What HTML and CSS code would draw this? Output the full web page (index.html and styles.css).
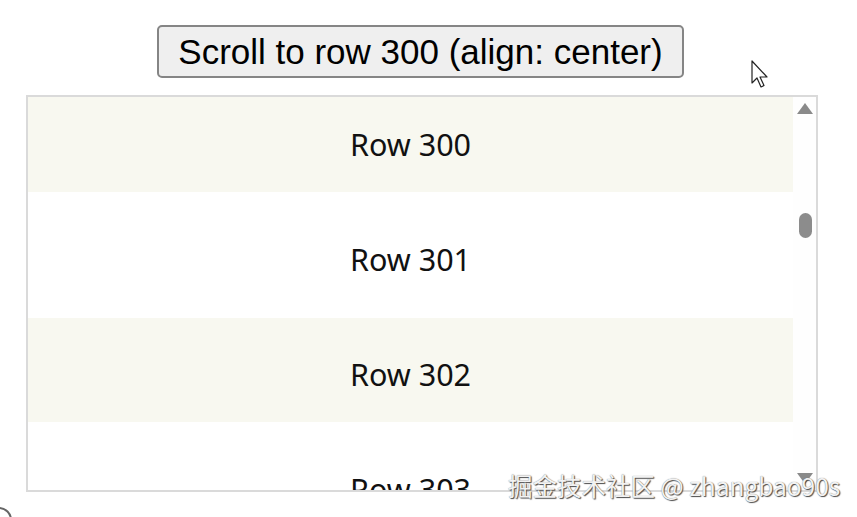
FILE: index.html
```html
<!DOCTYPE html>
<html lang="en">
<head>
<meta charset="utf-8">
<title>Scroll to row</title>
<link rel="stylesheet" href="styles.css">
</head>
<body>
<div class="app">
  <div class="toolbar">
    <button class="scroll-btn" type="button">Scroll to row 300 (align: center)</button>
  </div>
  <div class="list">
    <div class="viewport">
      <div class="rows">
        <div class="row even">Row 300</div>
        <div class="row odd">Row 301</div>
        <div class="row even">Row 302</div>
        <div class="row odd">Row 303</div>
      </div>
    </div>
    <div class="scrollbar">
      <span class="arrow up"></span>
      <span class="track"><span class="thumb"></span></span>
      <span class="arrow down"></span>
    </div>
  </div>
</div>
<div class="watermark">掘金技术社区 @ zhangbao90s</div>
<svg class="cursor" width="20" height="30" viewBox="0 0 20 30" aria-hidden="true">
  <path d="M1 1 L1 23 L6 18 L10 27 L13 25.5 L9 17 L16 17 Z" fill="#fff" stroke="#222" stroke-width="1.2" stroke-linejoin="round"/>
</svg>
<span class="corner"></span>
</body>
</html>
```

FILE: styles.css
```css
html, body {
  margin: 0;
  padding: 0;
  background: #ffffff;
}

body {
  position: relative;
  width: 857px;
  height: 517px;
  overflow: hidden;
  font-family: "Noto Sans", "Open Sans", sans-serif;
}

.app {
  display: flex;
  flex-direction: column;
  width: 792px;
  padding: 25px 0 0 26px;
  gap: 17px;
}

.toolbar {
  display: flex;
  justify-content: center;
  padding-right: 3px;
}

.scroll-btn {
  box-sizing: border-box;
  height: 53px;
  padding: 0 19px;
  font-family: "Liberation Sans", Arial, sans-serif;
  font-size: 35px;
  line-height: 1;
  color: #000;
  background: #efefef;
  border: 2px solid #858585;
  border-radius: 5px;
}

.list {
  box-sizing: border-box;
  display: flex;
  height: 397px;
  border: 2px solid #dadada;
  background: #fff;
}

.viewport {
  flex: 1;
  overflow: hidden;
}

.rows {
  display: flex;
  flex-direction: column;
  margin-top: -9px;
}

.row {
  box-sizing: border-box;
  display: flex;
  align-items: center;
  justify-content: center;
  padding-top: 7px;
  font-size: 30.5px;
  color: #111;
}

.row.even {
  height: 104px;
  background: #f8f8f0;
}

.row.odd {
  height: 126px;
  background: #ffffff;
}

.scrollbar {
  width: 23px;
  display: flex;
  flex-direction: column;
  align-items: center;
  padding: 6px 0;
  box-sizing: border-box;
  background: #fefefe;
}

.arrow {
  width: 0;
  height: 0;
  border-left: 8px solid transparent;
  border-right: 8px solid transparent;
}

.arrow.up {
  border-bottom: 11px solid #8a8a8a;
}

.arrow.down {
  border-top: 11px solid #8a8a8a;
}

.track {
  flex: 1;
  display: flex;
  flex-direction: column;
  align-items: center;
  padding-left: 1px;
}

.thumb {
  margin-top: 99px;
  width: 13px;
  height: 25px;
  border-radius: 7px;
  background: #8c8c8c;
}

.watermark {
  position: absolute;
  left: 508px;
  top: 469px;
  font-family: "Noto Sans CJK SC", "Noto Sans", sans-serif;
  font-size: 24.5px;
  line-height: 34px;
  white-space: nowrap;
  color: #f2f2f2;
  text-shadow: 1px 1px 1px #4a4a4a, 0 0 1px #777;
}

.cursor {
  position: absolute;
  left: 751px;
  top: 60px;
}

.corner {
  position: absolute;
  left: -14px;
  bottom: -16px;
  width: 22px;
  height: 22px;
  border: 2px solid #666;
  border-radius: 50%;
}
```
